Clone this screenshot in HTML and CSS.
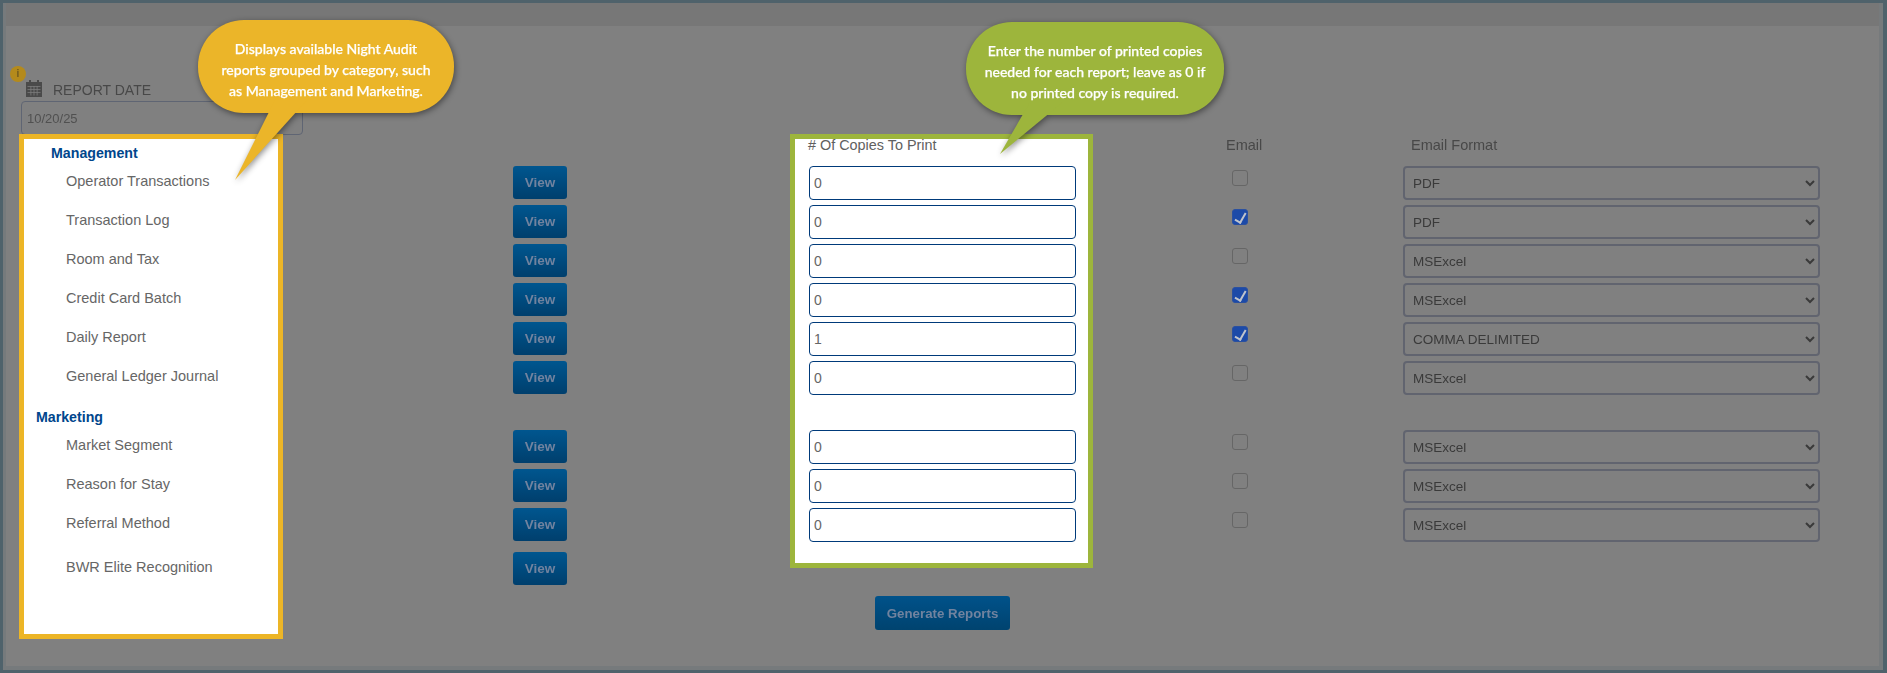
FILE: index.html
```html
<!DOCTYPE html>
<html lang="en">
<head>
<meta charset="UTF-8">
<title>Night Audit Reports</title>
<link rel="stylesheet" href="styles.css">
</head>
<body>

<div class="page">
    <div class="panel">
        <div class="topbar"></div>
        <form class="report-form">

            <div class="col-names">
                <div class="date-block dim">
                    <span class="info-badge">i</span>
                    <div class="date-label">
                        <svg class="calendar" viewBox="0 0 16 17" width="16" height="17">
                            <path fill="#4a4a4a" d="M3 0h2v2h6V0h2v2h3v15H0V2h3z"/>
                            <path fill="#7d7d7d" d="M1.500 6h13v.8h-13zM1.500 9h13v.8h-13zM1.500 12h13v.8h-13zM4.500 6.500h.8v9h-.8zM7.600 6.500h.8v9h-.8zM10.700 6.500h.8v9h-.8z"/>
                        </svg>
                        <span class="date-text">REPORT DATE</span>
                    </div>
                    <input class="date-input" type="text" value="10/20/25">
                </div>
                <div class="report-list">
                    <div class="group-head">Management</div>
                    <div class="report-name">Operator Transactions</div>
                    <div class="report-name">Transaction Log</div>
                    <div class="report-name">Room and Tax</div>
                    <div class="report-name">Credit Card Batch</div>
                    <div class="report-name">Daily Report</div>
                    <div class="report-name">General Ledger Journal</div>
                    <div class="group-head second">Marketing</div>
                    <div class="report-name">Market Segment</div>
                    <div class="report-name">Reason for Stay</div>
                    <div class="report-name">Referral Method</div>
                    <div class="report-name last">BWR Elite Recognition</div>
                </div>
            </div>

            <div class="col-view dim">
                <button type="button" class="view-btn">View</button>
                <button type="button" class="view-btn">View</button>
                <button type="button" class="view-btn">View</button>
                <button type="button" class="view-btn">View</button>
                <button type="button" class="view-btn">View</button>
                <button type="button" class="view-btn">View</button>
                <button type="button" class="view-btn group-gap">View</button>
                <button type="button" class="view-btn">View</button>
                <button type="button" class="view-btn">View</button>
                <button type="button" class="view-btn last">View</button>
            </div>

            <div class="col-copies">
                <div class="copies-box">
                    <div class="copies-head"># Of Copies To Print</div>
                    <input class="copies-input" type="text" value="0">
                    <input class="copies-input" type="text" value="0">
                    <input class="copies-input" type="text" value="0">
                    <input class="copies-input" type="text" value="0">
                    <input class="copies-input" type="text" value="1">
                    <input class="copies-input" type="text" value="0">
                    <input class="copies-input group-gap" type="text" value="0">
                    <input class="copies-input" type="text" value="0">
                    <input class="copies-input" type="text" value="0">
                </div>
                <button type="button" class="generate-btn dim">Generate Reports</button>
            </div>

            <div class="col-email dim">
                <div class="col-head">Email</div>
                <div class="check-row"><input type="checkbox"></div>
                <div class="check-row"><input type="checkbox" checked></div>
                <div class="check-row"><input type="checkbox"></div>
                <div class="check-row"><input type="checkbox" checked></div>
                <div class="check-row"><input type="checkbox" checked></div>
                <div class="check-row"><input type="checkbox"></div>
                <div class="check-row group-gap"><input type="checkbox"></div>
                <div class="check-row"><input type="checkbox"></div>
                <div class="check-row"><input type="checkbox"></div>
            </div>

            <div class="col-format dim">
                <div class="col-head">Email Format</div>
                <select class="format-select"><option>PDF</option></select>
                <select class="format-select"><option>PDF</option></select>
                <select class="format-select"><option>MSExcel</option></select>
                <select class="format-select"><option>MSExcel</option></select>
                <select class="format-select"><option>COMMA DELIMITED</option></select>
                <select class="format-select"><option>MSExcel</option></select>
                <select class="format-select group-gap"><option>MSExcel</option></select>
                <select class="format-select"><option>MSExcel</option></select>
                <select class="format-select"><option>MSExcel</option></select>
            </div>

        </form>
    </div>

    <div class="callout callout-yellow">
        <svg class="tail" viewBox="0 0 120 170" width="120" height="170">
            <polygon points="77,80 109,80 37,160"/>
        </svg>
        <p>Displays available Night Audit<br>reports grouped by category, such<br>as Management and Marketing.</p>
    </div>

    <div class="callout callout-green">
        <svg class="tail" viewBox="0 0 120 170" width="120" height="170">
            <polygon points="64,80 97,80 34,132"/>
        </svg>
        <p>Enter the number of printed copies<br>needed for each report; leave as 0 if<br>no printed copy is required.</p>
    </div>
</div>

</body>
</html>
```

FILE: styles.css
```css
* {
    margin: 0;
    padding: 0;
    box-sizing: border-box;
    font-family: 'Liberation Sans', Arial, sans-serif;
}
body {
    background: #4f626b;
    overflow: hidden;
}
.page {
    position: relative;
    width: 1887px;
    height: 673px;
    padding: 3px 4px 3px 3px;
    background: #4f626b;
}
.panel {
    height: 100%;
    background: #808080;
    border: 1px solid #767a7c;
    border-width: 0 4px 4px 3px;
}
.topbar {
    height: 23px;
    background: #777;
}
.dim {
    filter: blur(0.6px);
}

.report-form {
    display: flex;
    padding-left: 13px;
}
/* Names column */
.col-names {
    width: 264px;
}
.date-block {
    position: relative;
    height: 108px;
    padding-top: 54px;
}
.info-badge {
    position: absolute;
    left: -9px;
    top: 40px;
    width: 16px;
    height: 16px;
    border-radius: 50%;
    background: #b48a1c;
    color: #6e5a20;
    font-size: 10px;
    font-weight: bold;
    line-height: 16px;
    text-align: center;
}
.date-label {
    display: flex;
    align-items: flex-end;
    gap: 11px;
    margin-left: 7px;
    height: 17px;
    font-size: 14px;
    color: #484848;
}
.date-text {
    margin-bottom: -1px;
}
.date-input {
    display: block;
    width: 282px;
    height: 34px;
    margin: 4px 0 0 2px;
    padding-left: 5px;
    border: 1px solid #5f6573;
    border-radius: 4px;
    background: #808080;
    color: #505050;
    font-size: 13px;
}
.report-list {
    position: relative;
    height: 505px;
    padding-top: 3px;
    background: #fff;
    border: 5px solid #ecb526;
}
.group-head {
    height: 22px;
    line-height: 22px;
    padding-left: 27px;
    font-size: 14.200px;
    font-weight: bold;
    color: #00468c;
}
.group-head.second {
    margin-top: 13px;
    padding-left: 12px;
}
.report-name {
    height: 34px;
    line-height: 34px;
    margin-bottom: 5px;
    padding-left: 42px;
    font-size: 14.500px;
    color: #666;
}
.report-name.last {
    margin-top: 10px;
}

/* View buttons */
.col-view {
    display: flex;
    flex-direction: column;
    width: 54px;
    margin-left: 230px;
    padding-top: 140px;
}
.view-btn {
    width: 54px;
    height: 33px;
    margin-bottom: 6px;
    border: none;
    border-radius: 3px;
    background: linear-gradient(#00568f, #003f6d);
    color: #71839f;
    font-size: 13.500px;
    font-weight: bold;
}
.view-btn.group-gap {
    margin-top: 30px;
}
.view-btn.last {
    margin-top: 5px;
}

/* Copies column */
.col-copies {
    display: flex;
    flex-direction: column;
    align-items: center;
    width: 303px;
    margin-left: 223px;
    padding-top: 108px;
}
.copies-box {
    position: relative;
    width: 303px;
    height: 434px;
    padding-left: 14px;
    background: #fff;
    border: 5px solid #9db53c;
}
.copies-head {
    height: 27px;
    margin-left: -1px;
    font-size: 14.400px;
    line-height: 12px;
    color: #606060;
}
.copies-input {
    display: block;
    width: 267px;
    height: 34px;
    margin-bottom: 5px;
    padding-left: 4px;
    border: 1px solid #003a7a;
    border-radius: 4px;
    background: #fff;
    color: #666;
    font-size: 14px;
}
.copies-input.group-gap {
    margin-top: 35px;
}
.generate-btn {
    width: 135px;
    height: 34px;
    margin: 28px 0 0 2px;
    border: none;
    border-radius: 3px;
    background: linear-gradient(#00528a, #00436f);
    color: #71839f;
    font-size: 13.300px;
    font-weight: bold;
}

/* Email columns */
.col-head {
    height: 20px;
    margin-bottom: 11px;
    font-size: 14.500px;
    line-height: 20px;
    color: #484848;
}
.col-email {
    width: 40px;
    margin-left: 134px;
    padding-top: 109px;
}
.col-email .col-head {
    margin-left: -1px;
}
.check-row {
    height: 34px;
    margin-bottom: 5px;
    padding: 4px 0 0 5px;
}
.check-row.group-gap {
    margin-top: 35px;
}
.check-row input {
    appearance: none;
    display: block;
    position: relative;
    width: 16px;
    height: 16px;
    border: 1px solid #666;
    border-radius: 3px;
    background: #808080;
}
.check-row input:checked {
    background: #1c4aa8;
    border-color: #2a50a0;
}
.check-row input:checked::after {
    content: "";
    position: absolute;
    left: 4px;
    top: 1px;
    width: 5px;
    height: 10px;
    border: solid #c0c4cc;
    border-width: 0 2px 2px 0;
    transform: rotate(30deg);
}
.col-format {
    display: flex;
    flex-direction: column;
    width: 417px;
    margin-left: 136px;
    padding-top: 109px;
}
.col-format .col-head {
    padding-left: 8px;
}
.format-select {
    width: 417px;
    height: 34px;
    margin-bottom: 5px;
    padding-left: 4px;
    border: 2px solid #61646f;
    border-radius: 4px;
    background: #808080;
    color: #3a3a3a;
    font-size: 13.500px;
}
.format-select.group-gap {
    margin-top: 30px;
}

/* Callouts */
.callout {
    position: absolute;
    width: 256px;
    height: 93px;
    border-radius: 46px;
    filter: drop-shadow(1px 2px 3px rgba(0, 0, 0, 0.45));
}
.callout p {
    position: relative;
    padding-top: 18px;
    font-family: Lato, sans-serif;
    font-size: 14px;
    font-weight: 500;
    line-height: 21px;
    color: #fff;
    -webkit-text-stroke: 0.25px #fff;
    text-align: center;
    white-space: nowrap;
}
.tail {
    position: absolute;
    left: 0;
    top: 0;
}
.callout-yellow {
    left: 198px;
    top: 20px;
    background: #ebb529;
}
.callout-yellow .tail {
    fill: #ebb529;
}
.callout-green {
    left: 966px;
    top: 22px;
    width: 258px;
    background: #9db53c;
}
.callout-green .tail {
    fill: #9db53c;
}
```
